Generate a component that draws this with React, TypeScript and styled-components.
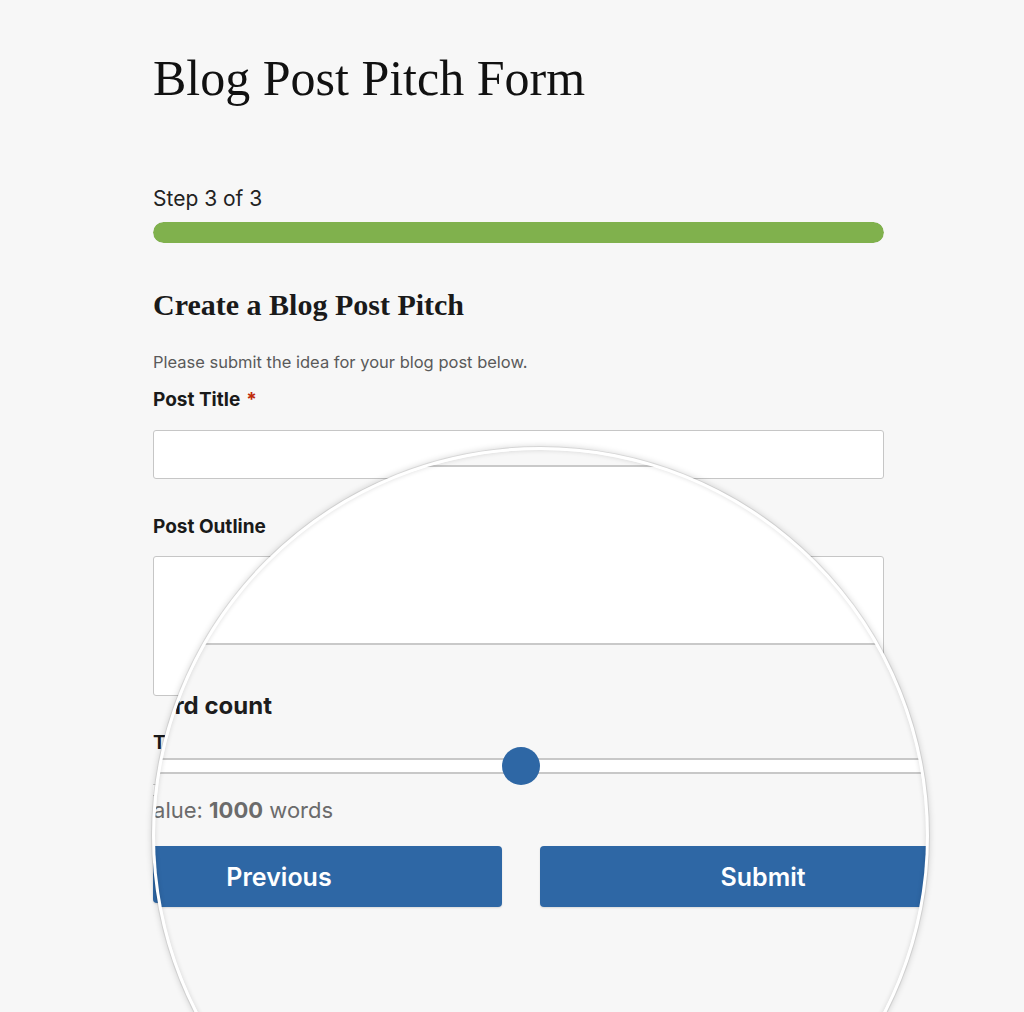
import React from "react";
import styled, { createGlobalStyle } from "styled-components";

const GlobalStyle = createGlobalStyle`
  html, body { margin: 0; padding: 0; background: #f7f7f7; }
  body { font-family: Inter, "Liberation Sans", sans-serif; color: #1e1e1e; }
  *, *::before, *::after { box-sizing: border-box; }
`;

const Page = styled.div`
  position: relative;
  width: 1024px;
  height: 1012px;
  overflow: hidden;
  background: #f7f7f7;
`;

const Column = styled.main`
  width: 731px;
  margin-left: 153px;
  padding-top: 48px;
  display: flex;
  flex-direction: column;
`;

const Title = styled.h1`
  margin: 0;
  font-family: "Liberation Serif", serif;
  font-weight: 400;
  font-size: 50px;
  line-height: 60px;
  color: #111;
`;

const StepText = styled.div`
  margin-top: 78px;
  font-size: 21px;
  line-height: 25px;
  color: #222;
`;

const Progress = styled.div`
  margin-top: 11px;
  height: 21px;
  border-radius: 11px;
  background: #e4e4e4;
  overflow: hidden;
`;

const ProgressFill = styled.div`
  height: 100%;
  border-radius: 11px;
  background: #80b14d;
`;

const SectionHeading = styled.h2`
  margin: 44px 0 0;
  font-family: "Liberation Serif", serif;
  font-weight: 700;
  font-size: 30px;
  line-height: 36px;
  color: #1a1a1a;
`;

const Description = styled.p`
  margin: 28px 0 0;
  font-size: 16.5px;
  line-height: 22px;
  color: #5a5a5a;
`;

const Label = styled.label<{ $gap: number }>`
  display: block;
  margin-top: ${(p) => p.$gap}px;
  font-size: 19px;
  font-weight: 700;
  line-height: 24px;
  color: #1a1a1a;
`;

const Required = styled.span`
  margin-left: 6px;
  color: #c02b0a;
`;

const TextInput = styled.input`
  display: block;
  width: 100%;
  margin-top: 18px;
  height: 49px;
  background: #fff;
  border: 1px solid #c6c6c6;
  border-radius: 3px;
  outline: none;
`;

const TextArea = styled.textarea`
  display: block;
  width: 100%;
  margin-top: 17px;
  height: 140px;
  background: #fff;
  border: 1px solid #c6c6c6;
  border-radius: 3px;
  resize: none;
  outline: none;
`;

const SliderRow = styled.div<{ $h: number; $gap: number }>`
  position: relative;
  margin-top: ${(p) => p.$gap}px;
  height: ${(p) => p.$h}px;
  display: flex;
  align-items: center;
`;

const Track = styled.div<{ $h: number; $line: number }>`
  width: 100%;
  height: ${(p) => p.$h}px;
  background: #fff;
  border-top: ${(p) => p.$line}px solid #c8c8c8;
  border-bottom: ${(p) => p.$line}px solid #c8c8c8;
`;

const Thumb = styled.div<{ $size: number }>`
  position: absolute;
  top: 50%;
  width: ${(p) => p.$size}px;
  height: ${(p) => p.$size}px;
  margin-left: ${(p) => -p.$size / 2}px;
  margin-top: ${(p) => -p.$size / 2}px;
  border-radius: 50%;
  background: #2e67a5;
`;

const ValueText = styled.div<{ $size: number; $gap: number; $indent: number }>`
  margin-top: ${(p) => p.$gap}px;
  margin-left: ${(p) => p.$indent}px;
  font-size: ${(p) => p.$size}px;
  line-height: 26px;
  color: #6b6b6b;
  b { font-weight: 700; }
`;

const ButtonRow = styled.div<{ $gap: number; $colGap: number }>`
  margin-top: ${(p) => p.$gap}px;
  display: grid;
  grid-template-columns: 1fr 1fr;
  column-gap: ${(p) => p.$colGap}px;
`;

const Button = styled.button<{ $h: number; $size: number }>`
  height: ${(p) => p.$h}px;
  border: none;
  border-radius: 4px;
  background: #2e67a5;
  color: #fff;
  font-family: Inter, "Liberation Sans", sans-serif;
  font-size: ${(p) => p.$size}px;
  font-weight: 600;
  box-shadow: 0 1px 2px rgba(0, 0, 0, 0.12);
`;

/* Magnifier overlay */
const Magnifier = styled.div`
  position: absolute;
  left: 152px;
  top: 447px;
  width: 777px;
  height: 777px;
  border-radius: 50%;
  border: 3px solid #fff;
  overflow: hidden;
  background: #f7f7f7;
  box-shadow: 0 0 0 1px rgba(0, 0, 0, 0.08), 0 0 7px rgba(0, 0, 0, 0.2);

  &::after {
    content: "";
    position: absolute;
    inset: 0;
    border-radius: 50%;
    box-shadow: inset 0 0 5px rgba(0, 0, 0, 0.14);
    pointer-events: none;
  }
`;

const ZoomedForm = styled.div`
  position: absolute;
  left: -99px;
  top: 15px;
  width: 930px;
  display: flex;
  flex-direction: column;
`;

const ZoomTextArea = styled.div`
  height: 180px;
  background: #fff;
  border: 2px solid #c9c9c9;
  border-radius: 5px;
`;

const ZoomHeading = styled.div`
  margin-top: 47px;
  margin-left: 80px;
  font-size: 24px;
  font-weight: 700;
  line-height: 28px;
  color: #1d1d1d;
`;

const value = 1000;
const max = 2000;

export default function App() {
  const pct = (value / max) * 100;
  return (
    <Page>
      <GlobalStyle />
      <Column>
        <Title>Blog Post Pitch Form</Title>
        <StepText>Step 3 of 3</StepText>
        <Progress>
          <ProgressFill style={{ width: "100%" }} />
        </Progress>
        <SectionHeading>Create a Blog Post Pitch</SectionHeading>
        <Description>Please submit the idea for your blog post below.</Description>
        <Label $gap={15}>
          Post Title<Required>*</Required>
        </Label>
        <TextInput type="text" />
        <Label $gap={36}>Post Outline</Label>
        <TextArea />
        <Label $gap={35}>Target word count</Label>
        <SliderRow $h={30} $gap={20}>
          <Track $h={12} $line={1} />
          <Thumb $size={30} style={{ left: `${pct}%` }} />
        </SliderRow>
        <ButtonRow $gap={50} $colGap={30}>
          <Button $h={48} $size={20} aria-label="Previous" />
          <Button $h={48} $size={20} aria-label="Submit" />
        </ButtonRow>
      </Column>

      <Magnifier>
        <ZoomedForm>
          <ZoomTextArea />
          <ZoomHeading>Word count</ZoomHeading>
          <SliderRow $h={38} $gap={27}>
            <Track $h={16} $line={2} />
            <Thumb $size={38} style={{ left: `${pct}%` }} />
          </SliderRow>
          <ValueText $size={22} $gap={12} $indent={83}>
            Value: <b>{value}</b> words
          </ValueText>
          <ButtonRow $gap={23} $colGap={38}>
            <Button $h={61} $size={25}>Previous</Button>
            <Button $h={61} $size={25}>Submit</Button>
          </ButtonRow>
        </ZoomedForm>
      </Magnifier>
    </Page>
  );
}
